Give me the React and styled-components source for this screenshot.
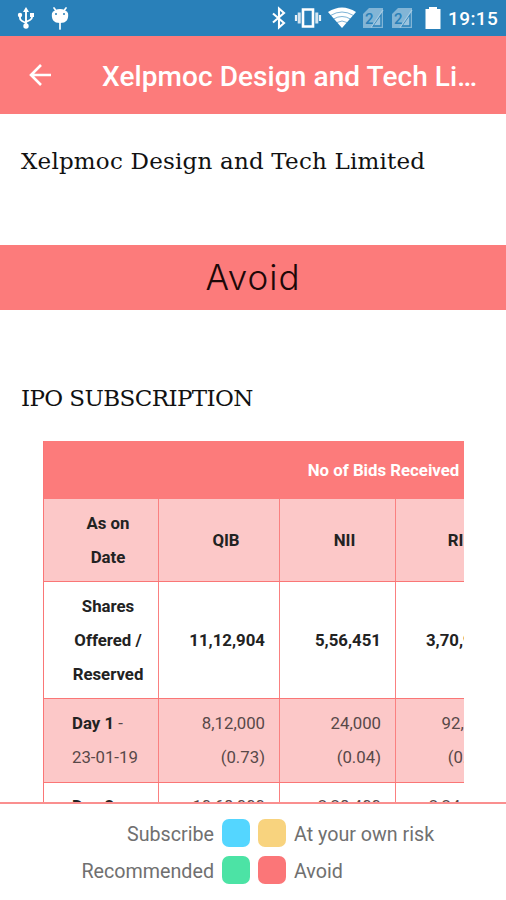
import React from 'react';
import styled, { createGlobalStyle } from 'styled-components';

const GlobalStyle = createGlobalStyle`
  * {
    box-sizing: border-box;
  }
  body {
    margin: 0;
    background: #fff;
    font-family: Roboto, sans-serif;
  }
`;

const Screen = styled.div`
  display: flex;
  flex-direction: column;
  width: 506px;
  height: 900px;
  overflow: hidden;
  background: #fff;
`;

const StatusBar = styled.div`
  display: flex;
  align-items: center;
  flex: none;
  height: 36px;
  padding: 0 8px 0 16px;
  background: #2980b9;
  color: #fff;
`;

const StatusIcon = styled.svg`
  flex: none;
  width: ${props => props.$w}px;
  height: 24px;
  margin-left: ${props => props.$gap || 0}px;
`;

const Spacer = styled.div`
  flex: 1;
`;

const Clock = styled.span`
  width: 50px;
  margin-left: 7px;
  padding-top: 1px;
  font-size: 19px;
  font-weight: 500;
  letter-spacing: 0.4px;
  white-space: nowrap;
`;

const AppBar = styled.header`
  display: flex;
  align-items: center;
  flex: none;
  height: 78px;
  padding-left: 24px;
  background: #fc7b7b;
  color: #fff;
`;

const BackButton = styled.button`
  display: flex;
  width: 32px;
  height: 32px;
  padding: 0;
  border: none;
  background: transparent;
  color: inherit;
`;

const Title = styled.h1`
  margin: 0 0 0 46px;
  padding-top: 3px;
  font-size: 28px;
  font-weight: 500;
  letter-spacing: 0.08px;
  white-space: nowrap;
`;

const Content = styled.main`
  flex: 1;
  min-height: 0;
  overflow: hidden;
`;

const Heading = styled.h2`
  margin: 0;
  padding: ${props => props.$top}px 0 0 21px;
  height: ${props => props.$height}px;
  font-family: 'DejaVu Serif', serif;
  font-size: ${props => props.$size}px;
  line-height: 32px;
  font-weight: 400;
  letter-spacing: ${props => props.$spacing}px;
  color: #111;
  white-space: nowrap;
`;

const Verdict = styled.div`
  height: 65px;
  background: #fc7b7b;
  color: #1c0808;
  font-family: Inter, sans-serif;
  font-size: 35px;
  font-weight: 300;
  line-height: 64px;
  letter-spacing: 1px;
  text-align: center;
`;

const TableScroll = styled.div`
  width: 421px;
  margin-left: 43px;
  overflow: hidden;
`;

const Table = styled.div`
  width: 668px;
  border-left: 1px solid #fa7676;
  font-size: 16.8px;
  line-height: 33.7px;
`;

const TableTitle = styled.div`
  height: 58px;
  padding: 13px 16px 0 28px;
  background: #fc7b7b;
  color: #fff;
  font-weight: 700;
  text-align: center;
`;

const Row = styled.div`
  display: grid;
  grid-template-columns: 115px 121px 116px 111px;
  height: ${props => props.$height}px;
  border-bottom: 1px solid #fa7676;
  background: ${props => (props.$tinted ? '#fcc8c8' : '#fff')};
`;

const Cell = styled.div`
  display: flex;
  flex-direction: column;
  justify-content: center;
  padding: ${props => (props.$bold ? 2 : 0)}px 14px 0 28px;
  border-right: 1px solid #fa8080;
  color: ${props => (props.$bold ? '#222' : '#584848')};
  font-weight: ${props => (props.$bold ? 700 : 400)};
  text-align: ${props => props.$align || 'right'};
  white-space: nowrap;

  b {
    color: #222;
  }
`;

const Legend = styled.footer`
  display: grid;
  grid-template-columns: 214px 28px 28px 1fr;
  grid-auto-rows: 28px;
  column-gap: 8px;
  row-gap: 9px;
  flex: none;
  height: 98px;
  padding-top: 15px;
  border-top: 2px solid #fa8f8f;
  background: #fff;
`;

const LegendLabel = styled.span`
  color: #707070;
  font-size: 19.7px;
  line-height: 31px;
  text-align: ${props => props.$align || 'left'};
`;

const Swatch = styled.span`
  width: 28px;
  height: 28px;
  border-radius: 7px;
  background: ${props => props.$color};
`;

const rows = [
  {
    height: 83,
    tinted: true,
    bold: true,
    align: 'center',
    cells: [['As on', 'Date'], ['QIB'], ['NII'], ['RII']],
  },
  {
    height: 117,
    bold: true,
    firstAlign: 'center',
    cells: [['Shares', 'Offered /', 'Reserved'], ['11,12,904'], ['5,56,451'], ['3,70,967']],
  },
  {
    height: 84,
    tinted: true,
    firstAlign: 'left',
    cells: [[<><b>Day 1</b> -</>, '23-01-19'], ['8,12,000', '(0.73)'], ['24,000', '(0.04)'], ['92,000', '(0.25)']],
  },
  {
    height: 83,
    firstAlign: 'left',
    cells: [[<><b>Day 2</b> -</>, '24-01-19'], ['10,68,000', '(0.96)'], ['2,28,400', '(0.41)'], ['2,24,000', '(0.60)']],
  },
];

const SimNumber = styled.text`
  font-family: Roboto, sans-serif;
  font-size: 15px;
  font-weight: 500;
  fill: #2980b9;
`;

const SimIcon = ({ gap }) => (
  <StatusIcon $w={22} $gap={gap} viewBox="0 0 22 24">
    <path d="M7 2h14v20H1V8z" fill="#fff" opacity="0.42" />
    <path d="M10.5 20L19 8v12z" fill="#fff" fillOpacity="0.2" stroke="#2980b9" strokeWidth="1.4" />
    <SimNumber x="3" y="18">2</SimNumber>
    <path d="M9 21.5L21 4" stroke="#a9cce3" strokeWidth="1.3" />
  </StatusIcon>
);

const App = () => {
  return (
    <>
      <GlobalStyle />
      <Screen>
        <StatusBar>
          <StatusIcon $w={20} viewBox="0 0 20 24">
            <g fill="none" stroke="#fff" strokeWidth="1.9">
              <path d="M10 3v17M4 10v2q0 2 2 3l4 2M16 9v2q0 2-2 3l-4 2" />
            </g>
            <path d="M10 1l3 5H7zM14 7h4v4h-4z" fill="#fff" />
            <circle cx="4" cy="9" r="2.2" fill="#fff" />
            <circle cx="10" cy="20" r="2.7" fill="#fff" />
          </StatusIcon>
          <StatusIcon $w={20} $gap={14} viewBox="0 0 20 24">
            <path d="M4 2l3 4M16 2l-3 4M10 15v8" stroke="#fff" strokeWidth="1.7" strokeLinecap="round" />
            <path d="M2 7q3-4 8-4t8 4q1.5 10-8 10T2 7z" fill="#fff" />
            <circle cx="6" cy="8" r="1" fill="#2980b9" />
            <circle cx="14" cy="8" r="1" fill="#2980b9" />
          </StatusIcon>
          <Spacer />
          <StatusIcon $w={16} viewBox="0 0 16 24">
            <path d="M2 7.5l11 9.5-5 4.5v-19L13 7 2 16.5" fill="none" stroke="#fff" strokeWidth="2.1" />
          </StatusIcon>
          <StatusIcon $w={28} $gap={7} viewBox="0 0 28 24">
            <path d="M9 3.5h10v17H9z" fill="none" stroke="#fff" strokeWidth="2.6" />
            <path d="M5.2 6.5v11M22.8 6.5v11" stroke="#fff" strokeWidth="3" opacity="0.8" />
            <path d="M2 9v6M26 9v6" stroke="#fff" strokeWidth="2.2" opacity="0.9" />
          </StatusIcon>
          <StatusIcon $w={28} $gap={6} viewBox="0 0 28 24">
            <path d="M0 6q14-9 28 0L14 22z" fill="#fff" />
            <path d="M2.5 9.5q11.5-7 23 0M5.5 13q8.500-5 17 0M9 16.5q5-3 10 0" fill="none" stroke="#2980b9" strokeWidth="1" opacity="0.6" />
          </StatusIcon>
          <SimIcon gap={6} />
          <SimIcon gap={7} />
          <StatusIcon $w={16} $gap={12} viewBox="0 0 16 24">
            <path d="M4 1h8v2h3.5v20H.5V3H4z" fill="#fff" />
          </StatusIcon>
          <Clock>19:15</Clock>
        </StatusBar>
        <AppBar>
          <BackButton aria-label="Back">
            <svg width="32" height="32" viewBox="0 0 32 32">
              <path d="M27 16H7M17 6L7 16l10 10" fill="none" stroke="#fff" strokeWidth="2.6" />
            </svg>
          </BackButton>
          <Title>Xelpmoc Design and Tech Li…</Title>
        </AppBar>
        <Content>
          <Heading $top={31} $height={131} $size={23} $spacing={0.2}>Xelpmoc Design and Tech Limited</Heading>
          <Verdict>Avoid</Verdict>
          <Heading $top={72} $height={131} $size={23} $spacing={-0.6}>IPO SUBSCRIPTION</Heading>
          <TableScroll>
            <Table>
              <TableTitle>No of Bids Received</TableTitle>
              {rows.map((row, i) => (
                <Row key={i} $height={row.height} $tinted={row.tinted}>
                  {row.cells.map((lines, j) => (
                    <Cell key={j} $bold={row.bold} $align={j === 0 && row.firstAlign ? row.firstAlign : row.align}>
                      {lines.map((line, k) => (
                        <div key={k}>{line}</div>
                      ))}
                    </Cell>
                  ))}
                </Row>
              ))}
            </Table>
          </TableScroll>
        </Content>
        <Legend>
          <LegendLabel $align="right">Subscribe</LegendLabel>
          <Swatch $color="#54d6ff" />
          <Swatch $color="#f8d37e" />
          <LegendLabel>At your own risk</LegendLabel>
          <LegendLabel $align="right">Recommended</LegendLabel>
          <Swatch $color="#4ce3a5" />
          <Swatch $color="#fb7678" />
          <LegendLabel>Avoid</LegendLabel>
        </Legend>
      </Screen>
    </>
  );
};

export default App;
